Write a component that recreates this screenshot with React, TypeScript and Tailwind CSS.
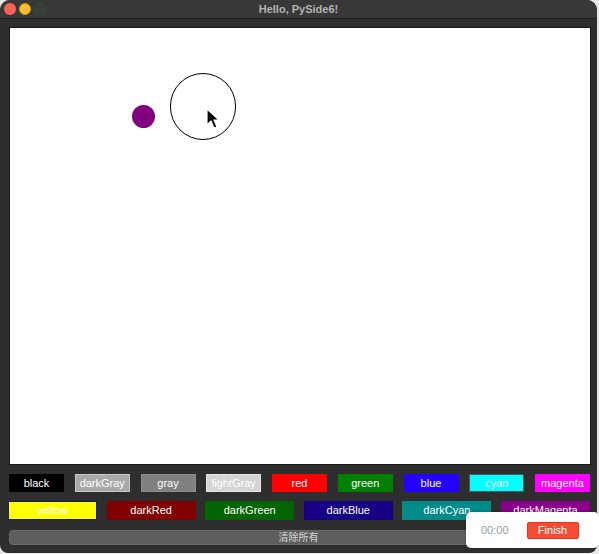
import React from "react";

const row1 = [
  { name: "black", bg: "bg-[#000000]", border: "border-[#000000]" },
  { name: "darkGray", bg: "bg-[#a9a9a9]", border: "border-[#c8c8c8]" },
  { name: "gray", bg: "bg-[#808080]", border: "border-[#8c8c8c]" },
  { name: "lightGray", bg: "bg-[#d3d3d3]", border: "border-[#e6e6e6]" },
  { name: "red", bg: "bg-[#ff0000]", border: "border-[#ff0000]" },
  { name: "green", bg: "bg-[#008000]", border: "border-[#008000]" },
  { name: "blue", bg: "bg-[#2400ff]", border: "border-[#2400ff]" },
  { name: "cyan", bg: "bg-[#00ffff]", border: "border-[#555555]" },
  { name: "magenta", bg: "bg-[#ff00ff]", border: "border-[#ff00ff]" },
];

const row2 = [
  { name: "yellow", bg: "bg-[#ffff00]", border: "border-[#1a1a6a]" },
  { name: "darkRed", bg: "bg-[#800000]", border: "border-[#800000]" },
  { name: "darkGreen", bg: "bg-[#006400]", border: "border-[#006400]" },
  { name: "darkBlue", bg: "bg-[#170085]", border: "border-[#170085]" },
  { name: "darkCyan", bg: "bg-[#008b8b]", border: "border-[#008b8b]" },
  { name: "darkMagenta", bg: "bg-[#8b008b]", border: "border-[#8b008b]" },
];

export default function App() {
  return (
    <div className="w-[599px] h-[554px] bg-[#e8e8e8] font-['Liberation_Sans','Noto_Sans_CJK_SC',sans-serif]">
      {/* WINDOW */}
      <div className="relative w-[597px] h-[553px] bg-[#2e2e2e] rounded-t-[10px] rounded-b-[8px] overflow-hidden flex flex-col">
        {/* TITLE BAR */}
        <div className="relative h-[19px] bg-[#383838] border-b border-[#1e1e1e] flex items-center">
          <div className="flex gap-[3px] pl-[4px]">
            <span className="w-[12px] h-[12px] rounded-full bg-[#fe5f57]" />
            <span className="w-[12px] h-[12px] rounded-full bg-[#febc2e] border border-[#d4a000]" />
            <span className="w-[12px] h-[12px] rounded-full bg-[#3c3c3c] border border-[#2a5a2a]" />
          </div>
          <div className="absolute inset-0 flex items-center justify-center text-[11px] font-bold text-[#b4b4b4]">
            Hello, PySide6!
          </div>
        </div>

        {/* CANVAS */}
        <div className="ml-[9px] mt-[8px] w-[582px] h-[438px] bg-white border border-[#1a1a1a] relative">
          <div className="absolute left-[122px] top-[77px] w-[23px] h-[23px] rounded-full bg-[#800080]" />
          <div className="absolute left-[160px] top-[45px] w-[66px] h-[67px] rounded-full border border-black" />
          <svg className="absolute left-[195px] top-[80px]" width="16" height="22" viewBox="0 0 16 22">
            <path d="M2 1 L2 17 L6 13 L9 20 L12 19 L9 12 L14 12 Z" fill="black" stroke="white" strokeWidth="1.2" />
          </svg>
        </div>

        {/* ROW 1 */}
        <div className="flex justify-between pl-[9px] pr-[7px] mt-[9px]">
          {row1.map((c) => (
            <div
              key={c.name}
              className={`w-[55px] h-[18px] border ${c.bg} ${c.border} text-white text-[11px] flex items-center justify-center`}
            >
              {c.name}
            </div>
          ))}
        </div>

        {/* ROW 2 */}
        <div className="flex justify-between pl-[8px] pr-[7px] mt-[9px]">
          {row2.map((c) => (
            <div
              key={c.name}
              className={`w-[89px] h-[19px] border ${c.bg} ${c.border} text-white text-[11px] flex items-center justify-center`}
            >
              {c.name}
            </div>
          ))}
        </div>

        {/* CLEAR */}
        <div className="mx-[9px] mt-[10px] h-[15px] rounded-[4px] bg-[#5e5e5e] border border-[#6a6a6a] text-[10px] text-[#d8d8d8] flex items-center justify-center">
          清除所有
        </div>
      </div>

      {/* TIMER OVERLAY */}
      <div className="absolute left-[466px] top-[512px] w-[133px] h-[36px] bg-white rounded-[5px] shadow-[0_0_2px_rgba(0,0,0,0.4)] flex items-center gap-[18px] pl-[15px]">
        <span className="text-[11px] text-[#9a9a9a]">00:00</span>
        <button className="w-[52px] h-[17px] bg-[#f24e36] border border-[#ff2a1a] rounded-[2px] text-white text-[11px] flex items-center justify-center">
          Finish
        </button>
      </div>
    </div>
  );
}
